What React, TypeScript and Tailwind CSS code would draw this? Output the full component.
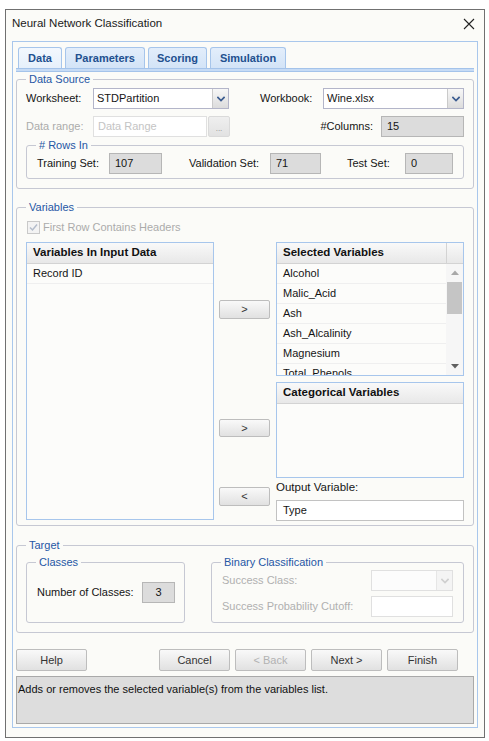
import React from "react";

function Legend({ children }: { children: React.ReactNode }) {
  return (
    <legend className="ml-[9px] px-[3px] h-[14px] leading-[14px] text-[11px] text-[#2657a5]">
      {children}
    </legend>
  );
}

function Chevron({ color }: { color: string }) {
  return (
    <svg width="8" height="6" viewBox="0 0 8 6">
      <path d="M1 1.5 L4 4.5 L7 1.5" fill="none" stroke={color} strokeWidth="1.7" strokeLinecap="square" />
    </svg>
  );
}

function Select({ cls, value }: { cls: string; value: string }) {
  return (
    <div className={`h-[21px] border border-[#b3b5c9] bg-white flex ${cls}`}>
      <div className="flex-1 pl-[3px] flex items-center">{value}</div>
      <div className="w-[16px] border-l border-[#cacaca] bg-linear-to-b from-[#f7f7f7] to-[#dcdcdc] flex items-center justify-center">
        <Chevron color="#3a5b8f" />
      </div>
    </div>
  );
}

function Box({ cls, children }: { cls: string; children?: React.ReactNode }) {
  return (
    <div className={`h-[21px] bg-[#dcdcdc] border border-[#b6b6b6] flex items-center pl-[5px] ${cls}`}>
      {children}
    </div>
  );
}

function Btn({ cls, children, disabled }: { cls: string; children: React.ReactNode; disabled?: boolean }) {
  return (
    <div
      className={`h-full rounded-[2px] border border-[#bdbdbd] bg-linear-to-b from-[#f9f9f9] to-[#e1e1e1] flex items-center justify-center text-[11px] ${
        disabled ? "text-[#b2b2b2]" : "text-[#333333]"
      } ${cls}`}
    >
      {children}
    </div>
  );
}

function Tab({ cls, label, active }: { cls: string; label: string; active?: boolean }) {
  return (
    <div
      className={`h-[21px] border border-b-0 border-[#a6c5eb] rounded-t-[3px] flex items-center justify-center text-[11px] font-bold text-[#22508f] ${
        active ? "bg-linear-to-b from-[#f3f8fe] to-[#e6f0fb]" : "bg-linear-to-b from-[#e3eefb] to-[#d3e4f7]"
      } ${cls}`}
    >
      {label}
    </div>
  );
}

function Row({ label }: { label: string }) {
  return (
    <div className="h-[20px] shrink-0 border-b border-[#efefef] pl-[6px] flex items-center whitespace-nowrap">
      {label}
    </div>
  );
}

function ListHeader({ title, scroll }: { title: string; scroll?: boolean }) {
  return (
    <div className="h-[21px] shrink-0 flex border-b border-[#d3d3d3] bg-linear-to-b from-[#f9f9f9] to-[#e8e8e8]">
      <div className="flex-1 pl-[6px] flex items-center font-bold text-[11.5px] text-[#111111]">{title}</div>
      {scroll && <div className="w-[17px] border-l border-[#d3d3d3]" />}
    </div>
  );
}

export default function App() {
  return (
    <div className="w-[489px] h-[741px] bg-white pt-[9px] pl-[5px] font-['Liberation_Sans',Arial,Helvetica,sans-serif] text-[11px] text-[#151515]">
      <div className="w-[480px] h-[729px] border border-[#707070] bg-[#fbfbf8] flex flex-col">
        {/* Title bar */}
        <div className="h-[31px] shrink-0 pb-[3px] pl-[6px] pr-[9px] flex items-center justify-between">
          <span className="text-[11.5px] text-[#1a1a1a]">Neural Network Classification</span>
          <svg width="12" height="12" viewBox="0 0 12 12">
            <path d="M1 1 L11 11 M11 1 L1 11" stroke="#222222" strokeWidth="1.1" fill="none" />
          </svg>
        </div>

        {/* Panel */}
        <div className="ml-[6px] w-[466px] h-[687px] border border-[#a9c7ec] pt-[5px] px-[3px] pb-[3px] flex flex-col">
          {/* Tabs */}
          <div className="ml-[2px] flex gap-[3px] h-[21px] shrink-0">
            <Tab cls="w-[44px]" label="Data" active />
            <Tab cls="w-[80px]" label="Parameters" />
            <Tab cls="w-[59px]" label="Scoring" />
            <Tab cls="w-[76px]" label="Simulation" />
          </div>
          <div className="h-[4px] shrink-0 border-y border-[#a4c3ea] bg-[#c6dbf5]" />

          {/* Data Source */}
          <fieldset className="border border-[#c6c8d3] rounded-[3px]">
            <Legend>Data Source</Legend>
            <div className="px-[9px] pt-[2px] pb-[9px]">
              <div className="flex items-center h-[21px]">
                <span className="w-[67px]">Worksheet:</span>
                <Select cls="w-[136px]" value="STDPartition" />
                <span className="ml-auto w-[63px]">Workbook:</span>
                <Select cls="w-[141px]" value="Wine.xlsx" />
              </div>
              <div className="flex items-center h-[21px] mt-[7px]">
                <span className="w-[67px] text-[#ababab]">Data range:</span>
                <div className="w-[114px] h-[21px] border border-[#e0e0e0] bg-white pl-[4px] flex items-center text-[#c4c4c4]">
                  Data Range
                </div>
                <div className="ml-[1px] w-[22px] h-[21px] rounded-[2px] border border-[#dadada] bg-linear-to-b from-[#efefef] to-[#e2e2e2] flex items-end justify-center pb-[3px] text-[8px] leading-[8px] text-[#8a8a8a]">
                  ...
                </div>
                <span className="ml-auto mr-[8px]">#Columns:</span>
                <Box cls="w-[83px]">15</Box>
              </div>
              <fieldset className="mt-[1px] border border-[#c6c8d3] rounded-[3px]">
                <Legend># Rows In</Legend>
                <div className="flex items-center pl-[10px] pt-[1px] pb-[4px]">
                  <span className="w-[72px]">Training Set:</span>
                  <Box cls="w-[53px]">107</Box>
                  <span className="ml-[27px] w-[81px]">Validation Set:</span>
                  <Box cls="w-[51px]">71</Box>
                  <span className="ml-[26px] w-[58px]">Test Set:</span>
                  <Box cls="w-[48px]">0</Box>
                </div>
              </fieldset>
            </div>
          </fieldset>

          {/* Variables */}
          <fieldset className="mt-[11px] border border-[#c6c8d3] rounded-[3px]">
            <Legend>Variables</Legend>
            <div className="px-[9px] pt-[6px] pb-[4px]">
              <div className="h-[14px] flex items-center">
                <div className="ml-[1px] w-[13px] h-[13px] border border-[#c9c9c9] bg-[#f3f3f3] flex items-center justify-center">
                  <svg width="9" height="9" viewBox="0 0 9 9">
                    <path d="M1 4.5 L3.5 7 L8 1.5" fill="none" stroke="#b3bccb" strokeWidth="1.5" />
                  </svg>
                </div>
                <span className="ml-[3px] text-[#ababab]">First Row Contains Headers</span>
              </div>
              <div className="mt-[8px] flex items-start">
                {/* Left list */}
                <div className="w-[188px] h-[278px] border border-[#a7c6ec] bg-[#fcfcfa] flex flex-col overflow-hidden">
                  <ListHeader title="Variables In Input Data" />
                  <Row label="Record ID" />
                </div>
                {/* Middle buttons */}
                <div className="ml-[5px] w-[51px] flex flex-col pt-[58px]">
                  <Btn cls="h-[20px] w-[51px]">&gt;</Btn>
                  <div className="h-[100px]" />
                  <Btn cls="h-[20px] w-[51px]">&gt;</Btn>
                  <div className="h-[50px]" />
                  <Btn cls="h-[20px] w-[51px]">&lt;</Btn>
                </div>
                {/* Right column */}
                <div className="ml-[6px] w-[188px] flex flex-col">
                  <div className="h-[134px] border border-[#a7c6ec] bg-[#fcfcfa] flex flex-col overflow-hidden">
                    <ListHeader title="Selected Variables" scroll />
                    <div className="flex flex-1 min-h-0">
                      <div className="flex-1 overflow-hidden flex flex-col">
                        <Row label="Alcohol" />
                        <Row label="Malic_Acid" />
                        <Row label="Ash" />
                        <Row label="Ash_Alcalinity" />
                        <Row label="Magnesium" />
                        <Row label="Total_Phenols" />
                      </div>
                      <div className="w-[17px] bg-[#f6f6f6] flex flex-col items-center">
                        <div className="h-[17px] flex items-center justify-center">
                          <svg width="8" height="5" viewBox="0 0 8 5">
                            <path d="M0 5 L4 0.5 L8 5 Z" fill="#a8a8a8" />
                          </svg>
                        </div>
                        <div className="mt-[1px] w-[15px] h-[32px] bg-[#c5c5c5]" />
                        <div className="flex-1" />
                        <div className="h-[17px] flex items-center justify-center">
                          <svg width="8" height="5" viewBox="0 0 8 5">
                            <path d="M0 0 L4 4.5 L8 0 Z" fill="#606060" />
                          </svg>
                        </div>
                      </div>
                    </div>
                  </div>
                  <div className="mt-[6px] h-[96px] border border-[#a7c6ec] bg-[#fcfcfa] flex flex-col overflow-hidden">
                    <ListHeader title="Categorical Variables" />
                  </div>
                  <div className="mt-[3px] h-[14px] flex items-center text-[11.5px]">Output Variable:</div>
                  <div className="mt-[5px] h-[21px] border border-[#c2c2c2] bg-white pl-[6px] flex items-center">Type</div>
                </div>
              </div>
            </div>
          </fieldset>

          {/* Target */}
          <fieldset className="mt-[12px] border border-[#c6c8d3] rounded-[3px]">
            <Legend>Target</Legend>
            <div className="flex pl-[9px] pt-[3px] pb-[9px]">
              <fieldset className="w-[159px] border border-[#c6c8d3] rounded-[3px]">
                <Legend>Classes</Legend>
                <div className="flex items-center pl-[10px] pt-[13px]">
                  <span className="w-[105px]">Number of Classes:</span>
                  <div className="w-[33px] h-[21px] bg-[#dcdcdc] border border-[#b6b6b6] flex items-center justify-center">3</div>
                </div>
              </fieldset>
              <fieldset className="ml-[26px] w-[253px] border border-[#c6c8d3] rounded-[3px]">
                <Legend>Binary Classification</Legend>
                <div className="pl-[10px] pt-[1px] pb-[5px]">
                  <div className="flex items-center h-[21px]">
                    <span className="w-[149px] text-[#b0b0b0]">Success Class:</span>
                    <div className="w-[82px] h-[21px] border border-[#e0e0e0] bg-[#fcfcfc] flex">
                      <div className="flex-1" />
                      <div className="w-[16px] border-l border-[#e6e6e6] bg-[#f4f4f4] flex items-center justify-center">
                        <Chevron color="#cfcfcf" />
                      </div>
                    </div>
                  </div>
                  <div className="flex items-center h-[21px] mt-[5px]">
                    <span className="w-[149px] text-[#b0b0b0]">Success Probability Cutoff:</span>
                    <div className="w-[82px] h-[21px] border border-[#e0e0e0] bg-white" />
                  </div>
                </div>
              </fieldset>
            </div>
          </fieldset>

          {/* Buttons */}
          <div className="mt-[16px] h-[22px] shrink-0 flex">
            <Btn cls="w-[71px]">Help</Btn>
            <div className="ml-[72px] flex gap-[5px]">
              <Btn cls="w-[71px]">Cancel</Btn>
              <Btn cls="w-[71px]" disabled>
                &lt; Back
              </Btn>
              <Btn cls="w-[71px]">Next &gt;</Btn>
              <Btn cls="w-[71px]">Finish</Btn>
            </div>
          </div>

          {/* Status */}
          <div className="mt-[5px] h-[48px] shrink-0 bg-[#dddddd] border border-[#a9a9a9] pl-[1px] pt-[4px] text-[#111111]">
            Adds or removes the selected variable(s) from the variables list.
          </div>
        </div>
      </div>
    </div>
  );
}
